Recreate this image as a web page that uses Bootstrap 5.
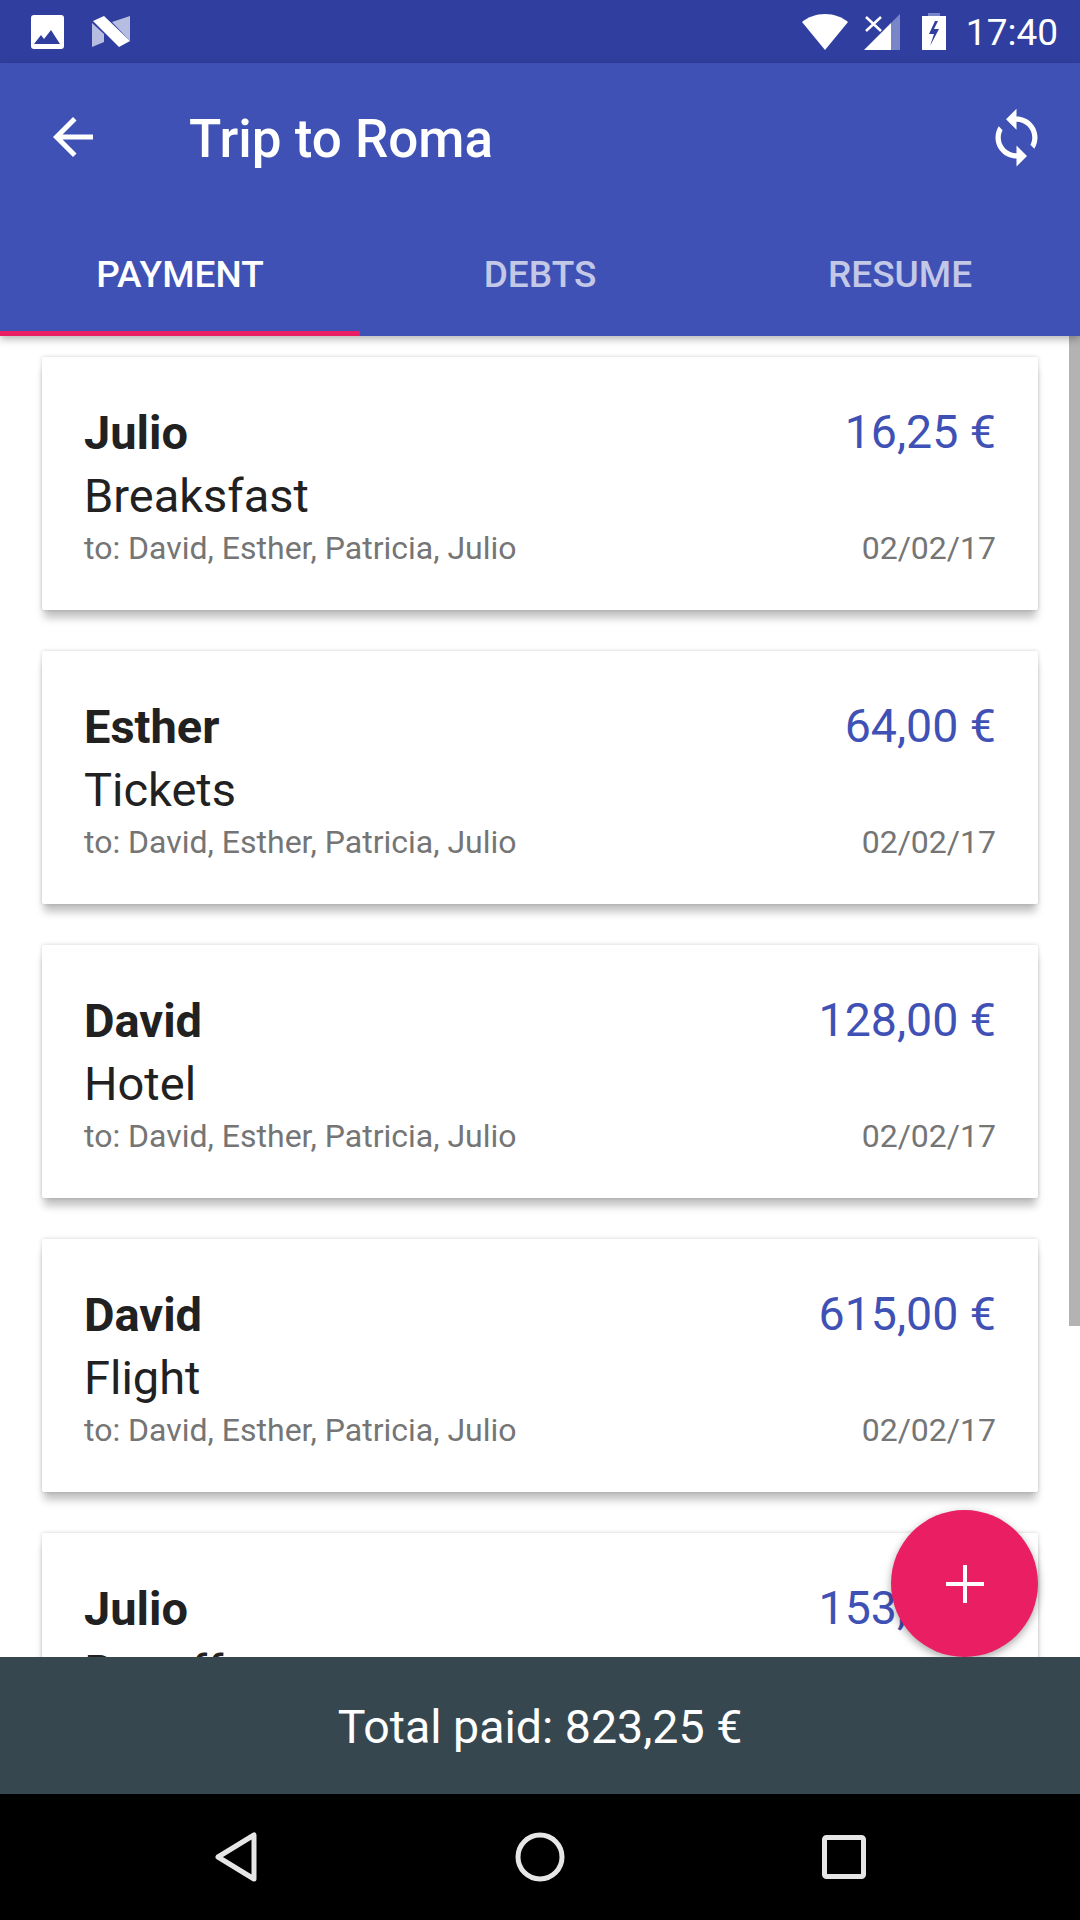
<!DOCTYPE html>
<html lang="en">
<head>
  <meta charset="UTF-8" />
  <meta name="viewport" content="width=device-width, initial-scale=1.0"/>
  <title>Trip to Roma</title>
  <link href="https://cdn.jsdelivr.net/npm/bootstrap@5.3.3/dist/css/bootstrap.min.css" rel="stylesheet"/>
  <style>
    body { font-family: Roboto, "Liberation Sans", sans-serif; background: #fff; overflow: hidden; }
    .screen { height: 1920px; }
    .status-bar { height: 63px; background: #303f9f; padding: 0 22px 0 30px; color: #fff; }
    .status-time { font-size: 37px; line-height: 1; margin-left: 20px; padding-top: 1px; }
    .logo-n { margin-left: 28px; }
    .cell-icon { margin-left: 16px; }
    .batt-icon { margin-left: 22px; }
    .app-bar { height: 273px; background: #3f51b5; color: #fff; box-shadow: 0 3px 8px rgba(0,0,0,.3); z-index: 2; }
    .bar-top { height: 146px; padding: 2px 32px 0 43px; }
    .bar-title { font-size: 53px; font-weight: 500; margin-left: 86px; margin-top: 5px; line-height: 1; }
    .tab-row { height: 127px; }
    .tab-item { width: 360px; font-size: 37px; font-weight: 500; color: rgba(255,255,255,.7); padding-bottom: 34px; }
    .tab-item.active-tab { color: #fff; border-bottom: 5px solid #e91e63; padding-bottom: 29px; }
    .pay-list { padding: 21px 42px 0 42px; overflow: hidden; }
    .pay-card { width: 996px; height: 253px; margin-bottom: 41px; padding: 44px 42px 0 42px; border: 0; border-radius: 2px; box-shadow: 0 0 4px rgba(0,0,0,.18), 0 10px 8px -2px rgba(0,0,0,.24); flex: none; }
    .pay-line { line-height: 63px; height: 63px; font-size: 47px; color: #212121; }
    .pay-who { font-weight: 700; }
    .pay-amount { color: #3f51b5; font-size: 46.5px; }
    .pay-sub { font-size: 32px; color: #757575; line-height: 43px; height: 43px; }
    .scroll-thumb { top: 0; right: 0; width: 11px; height: 990px; background: #b3b3b3; }
    .fab-add { right: 42px; bottom: 0; width: 147px; height: 147px; background: #e91e63; box-shadow: 0 3px 8px rgba(0,0,0,.35); }
    .total-bar { height: 137px; background: #37474f; color: #fff; font-size: 46.5px; padding-top: 4px; flex: none; }
    .nav-bar { height: 126px; background: #000; flex: none; }
    .nav-slot { width: 304px; }
  </style>
</head>
<body>
  <div class="screen d-flex flex-column">
    <div class="status-bar d-flex align-items-center flex-shrink-0">
      <svg width="34" height="34" viewBox="0 0 34 34"><rect x="1" y="0" width="33" height="34" rx="3" fill="#fff"/><path d="M4 29l7-9 3 4 7-9 9 14z" fill="#303f9f"/></svg>
      <svg class="logo-n" width="38" height="32" viewBox="0 0 38 32"><path d="M0 7l12 11v8L0 31z" fill="#b7bde0"/><path d="M20 6L38 0v25z" fill="#b7bde0"/><path d="M1 5l11-5 26 25-11 6z" fill="#fff"/></svg>
      <div class="d-flex align-items-center ms-auto">
        <svg width="46" height="36" viewBox="0 0 46 36"><path d="M23 36L0 8C6 3 14 0 23 0s17 3 23 8z" fill="#fff"/></svg>
        <svg class="cell-icon" width="36" height="36" viewBox="0 0 36 36"><path d="M27 9l9-9v36h-9z" fill="#7985c9"/><path d="M0 36L27 9v27z" fill="#fff"/><path d="M2 3l15 14M17 3L2 17" stroke="#fff" stroke-width="2.5" fill="none"/></svg>
        <svg class="batt-icon" width="24" height="37" viewBox="0 0 24 37"><path d="M6 0h12v3H6z" fill="#7985c9"/><path fill-rule="evenodd" d="M0 3h24v34H0zM13 8L7 21h5l-4 12 9-17h-5l4-8z" fill="#fff"/></svg>
        <span class="status-time">17:40</span>
      </div>
    </div>

    <div class="app-bar position-relative flex-shrink-0">
      <div class="bar-top d-flex align-items-center">
        <svg width="60" height="60" viewBox="0 0 24 24"><path fill="#fff" d="M20 11H7.83l5.59-5.59L12 4l-8 8 8 8 1.41-1.41L7.83 13H20v-2z"/></svg>
        <span class="bar-title">Trip to Roma</span>
        <svg class="ms-auto" width="63" height="63" viewBox="0 0 24 24"><path fill="#fff" d="M12 4V1L8 5l4 4V6c3.31 0 6 2.69 6 6 0 1.01-.25 1.97-.7 2.8l1.46 1.46C19.54 15.03 20 13.57 20 12c0-4.42-3.58-8-8-8zm0 14c-3.31 0-6-2.69-6-6 0-1.01.25-1.97.7-2.8L5.24 7.74C4.46 8.97 4 10.43 4 12c0 4.42 3.58 8 8 8v3l4-4-4-4v3z"/></svg>
      </div>
      <div class="tab-row d-flex">
        <div class="tab-item active-tab d-flex align-items-end justify-content-center">PAYMENT</div>
        <div class="tab-item d-flex align-items-end justify-content-center">DEBTS</div>
        <div class="tab-item d-flex align-items-end justify-content-center">RESUME</div>
      </div>
    </div>

    <div class="position-relative flex-grow-1 overflow-hidden">
      <div class="pay-list d-flex flex-column h-100" id="payList"></div>
      <div class="scroll-thumb position-absolute"></div>
      <div class="fab-add position-absolute rounded-circle d-flex align-items-center justify-content-center">
        <svg width="38" height="38" viewBox="0 0 38 38"><path d="M17 0h4v17h17v4H21v17h-4V21H0v-4h17z" fill="#fff"/></svg>
      </div>
    </div>

    <div class="total-bar d-flex align-items-center justify-content-center">Total paid: 823,25 €</div>

    <div class="nav-bar d-flex align-items-center justify-content-center">
      <div class="nav-slot d-flex justify-content-center">
        <svg width="44" height="50" viewBox="0 0 44 50"><path d="M40 3v44L4 25z" fill="none" stroke="#e6e6e6" stroke-width="5" stroke-linejoin="round"/></svg>
      </div>
      <div class="nav-slot d-flex justify-content-center">
        <svg width="50" height="50" viewBox="0 0 50 50"><circle cx="25" cy="25" r="22" fill="none" stroke="#e6e6e6" stroke-width="5"/></svg>
      </div>
      <div class="nav-slot d-flex justify-content-center">
        <svg width="44" height="44" viewBox="0 0 44 44"><rect x="2.5" y="2.5" width="39" height="39" rx="2" fill="none" stroke="#e6e6e6" stroke-width="5"/></svg>
      </div>
    </div>
  </div>

  <script>
    const pagos = [
      { who: 'Julio', what: 'Breaksfast', amount: '16,25 €' },
      { who: 'Esther', what: 'Tickets', amount: '64,00 €' },
      { who: 'David', what: 'Hotel', amount: '128,00 €' },
      { who: 'David', what: 'Flight', amount: '615,00 €' },
      { who: 'Julio', what: 'Renoff', amount: '153,00 €' }
    ];
    const list = document.getElementById('payList');
    pagos.forEach(p => {
      const card = document.createElement('div');
      card.className = 'card pay-card';
      card.innerHTML = `
        <div class="pay-line d-flex justify-content-between">
          <span class="pay-who">${p.who}</span><span class="pay-amount">${p.amount}</span>
        </div>
        <div class="pay-line">${p.what}</div>
        <div class="pay-sub d-flex justify-content-between">
          <span>to: David, Esther, Patricia, Julio</span><span>02/02/17</span>
        </div>`;
      list.appendChild(card);
    });
  </script>
</body>
</html>
